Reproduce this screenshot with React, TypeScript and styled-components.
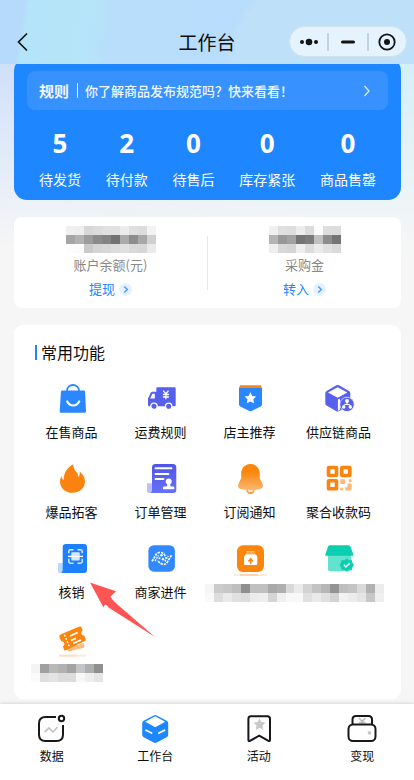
import React from "react";
import styled, { createGlobalStyle } from "styled-components";

const GlobalStyle = createGlobalStyle`
  *, *::before, *::after { box-sizing: border-box; }
  body {
    margin: 0;
    background: #f6f6f6;
    color: #0d0d0d;
    font-family: "Noto Sans CJK SC", sans-serif;
  }
  button, a { font: inherit; color: inherit; }
  button { border: 0; padding: 0; background: none; cursor: pointer; }
  a { text-decoration: none; }
  svg { display: block; flex: none; }
`;

const Page = styled.div`
  display: flex;
  flex-direction: column;
  min-height: 100vh;
  background:
    linear-gradient(180deg, rgba(246, 246, 246, 0) 64px, #f6f6f6 250px),
    linear-gradient(90deg, #cfe0fb, #d3f0f7);
`;

const Header = styled.header`
  position: sticky;
  top: 0;
  z-index: 2;
  display: grid;
  grid-template-columns: 1fr auto 1fr;
  align-items: center;
  padding: 26px 7px 7px;
  background:
    radial-gradient(ellipse 240px 140px at 112% 100%, #bee0f9 96%, rgba(190, 224, 249, 0) 100%),
    linear-gradient(100deg, #b5dafb 6%, #b3e4f8 7%, #b6e3f9 24%, #b9defb 27%, #b8dcfb 60%, #b7dafc 100%);
`;

const BackButton = styled.button`
  width: 32px;
  height: 28px;
  display: grid;
  place-items: center;
`;

const Title = styled.h1`
  margin: 0;
  font-size: 19px;
  line-height: 30px;
  font-weight: 400;
`;

const Capsule = styled.div`
  justify-self: end;
  display: flex;
  align-items: center;
  width: 118px;
  height: 31px;
  border: 1px solid #d3e3ea;
  border-radius: 16px;
  background: #e4f3fd;
`;

const CapsuleButton = styled.button`
  flex: 1;
  height: 18px;
  display: grid;
  place-items: center;
  & + & { border-left: 2px solid #c3d2dc; }
`;

const Main = styled.main`
  flex: 1;
  display: flex;
  flex-direction: column;
  gap: 17px;
  padding: 0 13px 5px 14px;
`;

const OrderCard = styled.section`
  margin-top: -6px;
  padding: 13px 13px 11px;
  border-radius: 13px;
  background: #1e86ff;
  color: #fff;
`;

const Notice = styled.button`
  display: flex;
  align-items: center;
  width: 100%;
  height: 39px;
  padding: 0 17px 0 12px;
  border-radius: 8px;
  background: #3791ff;
  font-size: 13px;
  line-height: 20px;
  font-weight: 500;
  color: #f1f7ff;
`;

const NoticeTag = styled.strong`
  margin-right: 7px;
  padding-right: 8px;
  font-size: 15px;
  line-height: 15px;
  border-right: 1px solid #e4f0ff;
`;

const NoticeText = styled.span`
  flex: 1;
  text-align: left;
`;

const Stats = styled.div`
  display: flex;
  justify-content: space-between;
  padding: 17px 12px 0;
`;

const Stat = styled.button`
  display: flex;
  flex-direction: column;
  align-items: center;
  gap: 10px;
  font-size: 14px;
  line-height: 20px;
`;

const StatValue = styled.strong`
  font-family: "Open Sans", "Noto Sans", sans-serif;
  font-size: 26px;
  line-height: 32px;
  font-weight: 700;
`;

const BalanceCard = styled.section`
  display: flex;
  align-items: center;
  height: 91px;
  border-radius: 8px;
  background: #fff;
`;

const Divider = styled.div`
  width: 1px;
  height: 54px;
  background: #e8e8e8;
`;

const Balance = styled.div`
  flex: 1;
  display: flex;
  flex-direction: column;
  align-items: center;
  font-size: 13px;
  line-height: 20px;
  color: #888;
`;

const BalanceLabel = styled.span`
  margin: 2px 0 4px;
`;

const BalanceAction = styled.button`
  display: flex;
  align-items: center;
  gap: 4px;
  color: #2587ff;
`;

const FeatureCard = styled.section`
  position: relative;
  padding: 16px 18px 17px 13px;
  border-radius: 9px;
  background: #fff;
`;

const SectionTitle = styled.h2`
  display: flex;
  align-items: center;
  gap: 4px;
  margin: 0 0 20px 8px;
  font-size: 16px;
  line-height: 22px;
  font-weight: 400;
  &::before {
    content: "";
    width: 2px;
    height: 15px;
    background: #1e86ff;
  }
`;

const FeatureGrid = styled.div`
  display: grid;
  grid-template-columns: repeat(4, minmax(0, 1fr));
  row-gap: 21px;
`;

const Feature = styled.button`
  display: flex;
  flex-direction: column;
  align-items: center;
  gap: 7px;
  font-size: 13px;
  line-height: 20px;
`;

const Pointer = styled.svg`
  position: absolute;
  left: 74px;
  top: 256px;
  pointer-events: none;
`;

const MosaicLabel = styled.span`
  display: flex;
  justify-content: center;
  height: 20px;
  align-items: flex-end;
`;

const TabBar = styled.nav`
  position: sticky;
  bottom: 0;
  z-index: 2;
  display: grid;
  grid-template-columns: repeat(4, 1fr);
  padding: 10px 0 16px;
  background: #fff;
  box-shadow: 0 -1px 3px rgba(0, 0, 0, 0.12);
`;

const Tab = styled.a`
  display: flex;
  flex-direction: column;
  align-items: center;
  gap: 4px;
  font-size: 12px;
  line-height: 16px;
`;

/* Masked values: one hex pair per tile, giving its grey level. */
const Mosaic = ({ rows, label }: { rows: string[]; label: string }) => {
  const columns = rows[0].split(" ").length;
  return (
    <svg width={columns * 9} height={rows.length * 9} role="img" aria-label={label} shapeRendering="crispEdges">
      {rows.map((row, y) =>
        row.split(" ").map((g, x) => (
          <rect key={`${x}-${y}`} x={x * 9} y={y * 9} width="9" height="9" fill={`#${g}${g}${g}`} />
        ))
      )}
    </svg>
  );
};

const Icon = ({ children }: { children: React.ReactNode }) => (
  <svg width="32" height="32" viewBox="0 0 32 32" fill="none" aria-hidden="true" overflow="visible">
    {children}
  </svg>
);

const TabIcon = ({ children }: { children: React.ReactNode }) => (
  <svg width="30" height="30" viewBox="0 0 30 30" fill="none" aria-hidden="true">
    {children}
  </svg>
);

const CircleArrow = () => (
  <svg width="13" height="13" viewBox="0 0 13 13" fill="none" aria-hidden="true">
    <circle cx="6.5" cy="6.5" r="6.5" fill="#e5f1ff" />
    <path d="M5.3 3.5l3 3-3 3" stroke="#4c9dfb" strokeWidth="1.5" />
  </svg>
);

const BagIcon = () => (
  <Icon>
    <path d="M11 10V7.5a6 5.5 0 0 1 12 0V10" stroke="#2b87fd" strokeWidth="1.8" />
    <path d="M6.3 7.4h21.4q1.3 0 1.4 1.3L30 28.2q0 1.5-1.3 1.5H5q-1.400 0-1.300-1.500L4.900 8.700q.1-1.300 1.400-1.300z" fill="#2b87fd" />
    <path d="M11.200 18.500c3 5.300 9 5.300 12 0" stroke="#fff" strokeWidth="2.200" strokeLinecap="round" />
  </Icon>
);

const TruckIcon = () => (
  <Icon>
    <path d="M12.500 4.300h17q1.200 0 1.200 1.200V22q0 1.300-1.300 1.300H4.200Q3 23.300 3 22v-6.500L5.700 9.800Q6.200 8.700 7.500 8.700h3.800V5.500q0-1.200 1.200-1.200z" fill="#5660ec" />
    <path d="M7.300 10.800h2.500v4.700H5.200z" fill="#fff" />
    <circle cx="9" cy="23.300" r="3.200" fill="#5660ec" stroke="#fff" strokeWidth="1.300" />
    <circle cx="23.700" cy="23.300" r="3.200" fill="#5660ec" stroke="#fff" strokeWidth="1.300" />
    <path d="M18.300 7.700l2.600 3.300 2.600-3.300M20.900 11v5.200M17.900 11.500h6M17.900 14h6" stroke="#fff" strokeWidth="1.300" />
  </Icon>
);

const ShieldIcon = () => (
  <Icon>
    <path d="M5 5h23v16.500q0 1.300-1.200 1.900L17.600 27.900q-1.100.6-2.200 0L6.200 23.400Q5 22.800 5 21.500z" fill="#2b87fd" />
    <path d="M6 2.200h21l1 2.900H5z" fill="#fb8416" />
    <path d="M16.400 9.200l1.800 3.700 4 .6-2.900 2.800.7 4-3.600-1.900-3.600 1.900.7-4-2.900-2.800 4-.6z" fill="#fff" />
  </Icon>
);

const CubeIcon = () => (
  <Icon>
    <path d="M13.400 2.300q1.300-.7 2.600 0L26 7.900q1.300.8 1.300 2.200v10.400q0 1.300-1.300 2.100l-10 5.700q-1.300.7-2.600 0L3.600 22.600q-1.300-.8-1.300-2.100V10.100q0-1.400 1.300-2.200z" fill="#5660ec" />
    <path d="M14.700 4.200L24.300 9.600l-9.600 5.100L5 9.600z" fill="#fff" />
    <path d="M14.900 16.600L16.900 15.500V27l-2 1z" fill="#fff" />
    <circle cx="24" cy="21.400" r="7.200" fill="#5660ec" stroke="#fff" strokeWidth=".7" />
    <path d="M24 18v3.500M20.900 24v-1q0-1.500 1.500-1.500h3.200q1.500 0 1.500 1.500v1" stroke="#fff" strokeWidth="1.100" />
    <g fill="#fff">
      <circle cx="24" cy="17.900" r="2" />
      <circle cx="20.700" cy="24" r="1.700" />
      <circle cx="27.300" cy="24" r="1.700" />
    </g>
  </Icon>
);

const FlameIcon = () => (
  <Icon>
    <path d="M17.300 1.300c.2 4 .7 5.200 3.500 8.200 1 1.100 1.300 3 1.200 4.600 1.600-.8 2-3 1.700-5.600C27 11.300 29 14.700 29 18.500 29 25 23.700 29.800 16.500 29.800S4 25 4 18.700c0-2.200.5-4 1.500-5.700.1 1.800.7 3.100 2 4C7.900 9.800 11.200 4.300 17.300 1.300z" fill="#fb8410" />
  </Icon>
);

const OrderIcon = () => (
  <Icon>
    <path d="M2 20.300h6V30H4q-2 0-2-2z" fill="#bdbffb" />
    <path d="M10.500 1H28q3.300 0 3.300 3.500V27q0 3-3 3H5.500Q7 29.500 7 27V4.500Q7 1 10.500 1z" fill="url(#orderFill)" />
    <path d="M10.500 5.200h16M10.500 11h13M10.500 16h8" stroke="#fff" strokeWidth="1.900" strokeLinecap="round" />
    <circle cx="23.700" cy="18.500" r="3" fill="#fff" />
    <path d="M22.500 20h2.400l.7 3.500h2.900q.8 0 .8.800v2H18v-2q0-.8.800-.8h3z" fill="#fff" />
    <defs>
      <linearGradient id="orderFill" x1="0" y1="0" x2="0" y2="1">
        <stop stopColor="#4f55e8" />
        <stop offset="1" stopColor="#6870f8" />
      </linearGradient>
    </defs>
  </Icon>
);

const BellIcon = () => (
  <Icon>
    <path d="M12.200 26.500h8.500c0 3-1.700 4.800-4.200 4.800s-4.300-1.800-4.300-4.800z" fill="#fba34b" />
    <path d="M14.200 27.300q2.300 1.600 4.600 0" stroke="#fff" strokeWidth="1.500" />
    <path d="M16.500 1c5.500 0 9.300 4.300 9.300 9.700v4.600L28.600 21c1 2.800-.2 4.600-2.700 5.200q-9.400 2-18.800 0C4.600 25.600 3.400 23.800 4.400 21l2.800-5.700v-4.600C7.200 5.300 11 1 16.500 1z" fill="url(#bellFill)" />
    <defs>
      <linearGradient id="bellFill" x1="0" y1="0" x2="0" y2="1">
        <stop offset=".3" stopColor="#fb850d" />
        <stop offset="1" stopColor="#fdb973" />
      </linearGradient>
    </defs>
  </Icon>
);

const QrIcon = () => (
  <Icon>
    <g stroke="#fb8410" strokeWidth="3.600">
      <rect x="5.500" y="4.500" width="8" height="8" rx=".4" />
      <rect x="18.800" y="4.500" width="8" height="8" rx=".4" />
      <rect x="5.500" y="17.800" width="8" height="8" rx=".4" />
    </g>
    <g fill="#fdb877">
      <rect x="17.300" y="16.300" width="4.800" height="4.800" rx=".8" />
      <rect x="25.700" y="16.300" width="2.900" height="2.900" rx=".7" />
      <rect x="17.300" y="24.800" width="2.800" height="2.800" rx=".7" />
      <path d="M24.500 20.500h3.300q.8 0 .8.800v5.500q0 .8-.8.800h-4.700q-.8 0-.8-.8v-2.500h2.200z" />
    </g>
  </Icon>
);

const ScanIcon = () => (
  <Icon>
    <path d="M2 20h6v10H4q-2 0-2-2z" fill="#b8d8fd" />
    <path d="M10 1h18q3 0 3 3.300V27q0 3-3 3H5q1.700-.5 1.700-3V4.300Q6.700 1 10 1z" fill="#1e80ff" />
    <path d="M12.800 10.300V8.500q0-1.700 1.700-1.700h3M21.500 6.800h3q1.700 0 1.700 1.700v1.800M12.800 15.800v2.700q0 1.700 1.700 1.700h3M21.500 20.200h3q1.700 0 1.700-1.700v-2.700" stroke="#d7e8ff" strokeWidth="1.500" />
    <rect x="15.300" y="9.300" width="8.400" height="8.200" rx="1" fill="#d5e7ff" />
    <path d="M12 13.400h15" stroke="#fff" strokeWidth="1.400" />
  </Icon>
);

const MerchantIcon = () => (
  <Icon>
    <rect x="3.400" y="2.200" width="26.500" height="26.500" rx="5.500" fill="#3189fd" />
    <path d="M7 18.300l4.300-7q1-1.500 3-1.800 3.800-.3 5.200 2.200" stroke="#fff" strokeWidth="1.700" strokeDasharray="2.400 .9" />
    <path d="M26.500 12.300l-4.300 7q-2 2.800-5 1.800-3.500-1.200-4.500-4" stroke="#fff" strokeWidth="1.700" strokeDasharray="2.400 .9" />
    <path d="M10 18l3.500-5.500M19.800 18.300l3.500-5.500M19.500 11.500l1.500 4" stroke="#fff" strokeWidth="1.400" strokeDasharray="1.800 1" />
    <g fill="#fff">
      <circle cx="16.500" cy="12.300" r="1.200" />
      <circle cx="18" cy="16.300" r="1.200" />
      <circle cx="14.500" cy="15.300" r="1" />
    </g>
  </Icon>
);

const BoxIcon = () => (
  <Icon>
    <path d="M0 32h33" stroke="#fdd9b5" />
    <path d="M6 32h18" stroke="#fbbd83" />
    <rect x="3" y="2.200" width="27" height="26.800" rx="6" fill="#fb850d" />
    <path d="M12.500 8.800h8" stroke="#fdc793" strokeWidth="1.500" />
    <path d="M11.500 11.300h10" stroke="#fedbb8" strokeWidth="1.500" />
    <path d="M11 12h11.500l.8 2v7q0 1-1 1H11q-1 0-1-1v-7z" fill="#fff" />
    <path d="M16.600 21v-5.500M14.200 17.700h4.800" stroke="#fb850d" strokeWidth="1.500" />
    <path d="M13.900 17.800l2.700-3 2.700 3z" fill="#fb850d" />
  </Icon>
);

const StoreIcon = () => (
  <Icon>
    <path d="M5 11h23v15.300q0 2-2 2H7q-2 0-2-2z" fill="#61e3cf" />
    <path d="M7 2.300h18.500q1.400 0 1.900 1.300l3 7.800q.4 1.300-1 1.300H3.300q-1.400 0-1-1.300l2.800-7.800q.5-1.300 1.900-1.300z" fill="#0bceb1" />
    <path d="M23.700 15.300l2.100 1.900 2.900-.1.700 2.700L31 22l-1.600 2.200-.7 2.700-2.900-.1-2.100 1.900-2.100-1.900-2.900.1-.7-2.700L16.400 22l1.600-2.200.7-2.700 2.900.1z" fill="#0bceb1" />
    <path d="M20.900 21.700l2.100 2.200 3.800-3.700" stroke="#fff" strokeWidth="1.500" />
  </Icon>
);

const TicketIcon = () => (
  <Icon>
    <path d="M3 32.600h27" stroke="#feecd9" strokeWidth="2" />
    <path d="M3 32.700h18" stroke="#fde1c5" strokeWidth="2" />
    <path d="M10 26l18-6 .5 4.500L13 28.500z" fill="#fdbb7e" />
    <path d="M5 11.300L23.500 3.600q1.500-.5 2.100.9l1.100 2.900c-2.400 1.600-1.600 5.200 1.500 5.200l1.500 3.300q.6 1.500-.8 2.200L10 27.300q-1.500.5-2.100-.9L7 23.500c2.500-1.700 1.500-5.300-1.600-5.200L3.300 14q-.5-1.800 1.700-2.700z" fill="#fb850d" />
    <path d="M8.500 11.700l5 12.300" stroke="#fff" strokeWidth="1.400" strokeDasharray="2 1.500" />
    <path d="M14 13l7.700-3.500M15 17.500l5-2.200M17.200 20.500l7.700-3.500" stroke="#fff" strokeWidth="1.800" />
  </Icon>
);

const stats = [
  ["5", "待发货"],
  ["2", "待付款"],
  ["0", "待售后"],
  ["0", "库存紧张"],
  ["0", "商品售罄"],
];

type FeatureItem = { icon: React.FC; label?: string; mask?: string[] };

const features: FeatureItem[] = [
  { icon: BagIcon, label: "在售商品" },
  { icon: TruckIcon, label: "运费规则" },
  { icon: ShieldIcon, label: "店主推荐" },
  { icon: CubeIcon, label: "供应链商品" },
  { icon: FlameIcon, label: "爆品拓客" },
  { icon: OrderIcon, label: "订单管理" },
  { icon: BellIcon, label: "订阅通知" },
  { icon: QrIcon, label: "聚合收款码" },
  { icon: ScanIcon, label: "核销" },
  { icon: MerchantIcon, label: "商家进件" },
  { icon: BoxIcon, mask: ["f5 cb c7 bf 8f c0 c0 a9 af d9", "f9 dd ea e0 dc ec ee d5 f0 f8"] },
  { icon: StoreIcon, mask: ["ea d3 c3 b6 94 be c4 da b1 ec", "f8 e0 ea e0 d3 f2 ec e4 c7 ef"] },
  { icon: TicketIcon, mask: ["f4 a0 b8 b1 a3 c4 ae 8f fe", "fa df e4 dc dc f7 ee e5 ff"] },
];

const tabs = [
  {
    label: "数据",
    icon: (
      <TabIcon>
        <path d="M19 3H8.500Q2 3 2 9.500v11Q2 27 8.500 27h11Q26 27 26 20.500V11" stroke="#181818" strokeWidth="2" />
        <circle cx="24.500" cy="4.500" r="2.700" stroke="#181818" strokeWidth="2" />
        <path d="M7.500 18l4.500-4 4 4 4.500-5" stroke="#c5c5c5" strokeWidth="1.700" />
      </TabIcon>
    ),
  },
  {
    label: "工作台",
    icon: (
      <TabIcon>
        <path d="M13.700 1.500q1.500-.8 3 0l10 5.300q1.500.8 1.500 2.500v11.400q0 1.600-1.500 2.500l-10 5.300q-1.500.8-3 0l-10-5.300q-1.500-.9-1.500-2.500V9.300q0-1.700 1.500-2.500z" fill="#1e86ff" />
        <path d="M15.200 2.300l10 5.400-10 5.500-10-5.500z" fill="#fff" />
        <path d="M6 16.300l5.500 2.700M24.500 16.300L19 19" stroke="#fff" strokeWidth="1.800" strokeLinecap="round" />
      </TabIcon>
    ),
  },
  {
    label: "活动",
    icon: (
      <TabIcon>
        <path d="M6.800 2.200h16.700q2.500 0 2.500 2.500v21q0 2.200-2 1l-8.800-5-8.800 5q-2 1.200-2-1v-21q0-2.500 2.400-2.500z" stroke="#181818" strokeWidth="2" />
        <path d="M15.500 4.300l1.800 3.700 4.200.6-3 3 .7 4.200-3.700-2-3.700 2 .7-4.200-3-3 4.200-.6z" fill="#c8c8c8" />
      </TabIcon>
    ),
  },
  {
    label: "变现",
    icon: (
      <TabIcon>
        <path d="M5.500 10.500V5.500Q5.500 2 9 2h12.500Q25 2 25 5.500v5" stroke="#181818" strokeWidth="2" />
        <path d="M12 4l3.200 3.500L18.500 4M15.200 7.500V10M12 8.500h6.500" stroke="#bdbdbd" strokeWidth="1.600" />
        <rect x="1.500" y="10.500" width="27" height="16.500" rx="4.500" stroke="#181818" strokeWidth="2" />
        <circle cx="22.500" cy="18.800" r="1.900" fill="#c8c8c8" />
      </TabIcon>
    ),
  },
];

export default function App() {
  return (
    <Page>
      <GlobalStyle />
      <Header>
        <BackButton aria-label="返回">
          <svg width="12" height="20" viewBox="0 0 12 20" fill="none">
            <path d="M10 1.500L1.500 10l8.500 8.500" stroke="#161616" strokeWidth="1.700" />
          </svg>
        </BackButton>
        <Title>工作台</Title>
        <Capsule>
          <CapsuleButton aria-label="更多">
            <svg width="20" height="8" viewBox="0 0 20 8" fill="#141414">
              <circle cx="3" cy="4" r="2" />
              <circle cx="10" cy="4" r="3.300" />
              <circle cx="17" cy="4" r="2" />
            </svg>
          </CapsuleButton>
          <CapsuleButton aria-label="最小化">
            <svg width="14" height="4" viewBox="0 0 14 4">
              <rect y=".5" width="14" height="3" rx="1.500" fill="#141414" />
            </svg>
          </CapsuleButton>
          <CapsuleButton aria-label="关闭">
            <svg width="18" height="18" viewBox="0 0 18 18" fill="none">
              <circle cx="9" cy="9" r="7.700" stroke="#141414" strokeWidth="1.800" />
              <circle cx="9" cy="9" r="3" fill="#141414" />
            </svg>
          </CapsuleButton>
        </Capsule>
      </Header>

      <Main>
        <OrderCard>
          <Notice>
            <NoticeTag>规则</NoticeTag>
            <NoticeText>你了解商品发布规范吗？快来看看！</NoticeText>
            <svg width="8" height="12" viewBox="0 0 8 12" fill="none" aria-hidden="true">
              <path d="M1.500 1l4.500 5-4.500 5" stroke="#d8e9ff" strokeWidth="1.300" />
            </svg>
          </Notice>
          <Stats>
            {stats.map(([value, label]) => (
              <Stat key={label}>
                <StatValue>{value}</StatValue>
                {label}
              </Stat>
            ))}
          </Stats>
        </OrderCard>

        <BalanceCard>
          <Balance>
            <Mosaic
              label="账户余额已隐藏"
              rows={["f0 ee d7 dc e0 e1 ed df dc f3", "a5 b2 9c 8b 84 72 ab 8d a8 d0", "fc fb ca d5 d8 dc e1 d9 d7 ea"]}
            />
            <BalanceLabel>账户余额(元)</BalanceLabel>
            <BalanceAction>
              提现
              <CircleArrow />
            </BalanceAction>
          </Balance>
          <Divider />
          <Balance>
            <Mosaic
              label="采购金已隐藏"
              rows={["f0 e0 dd ed dc fc dd dc", "b4 98 a2 74 7b c0 8d 74", "ee d8 d5 ee dc ea e0 d9"]}
            />
            <BalanceLabel>采购金</BalanceLabel>
            <BalanceAction>
              转入
              <CircleArrow />
            </BalanceAction>
          </Balance>
        </BalanceCard>

        <FeatureCard>
          <SectionTitle>常用功能</SectionTitle>
          <FeatureGrid>
            {features.map(({ icon: Glyph, label, mask }, index) => (
              <Feature key={index}>
                <Glyph />
                {mask ? (
                  <MosaicLabel>
                    <Mosaic rows={mask} label="名称已隐藏" />
                  </MosaicLabel>
                ) : (
                  label
                )}
              </Feature>
            ))}
          </FeatureGrid>
          <Pointer width="70" height="60" viewBox="0 0 70 60" aria-hidden="true">
            <path d="M2 1.500L28 10.300 22.500 15.500Q24 19 28 22.300L67 56 20.500 26.500Q17 20.500 15.500 26.500z" fill="#fd5553" />
          </Pointer>
        </FeatureCard>
      </Main>

      <TabBar>
        {tabs.map(({ label, icon }) => (
          <Tab key={label} href="#" aria-current={label === "工作台" ? "page" : undefined}>
            {icon}
            {label}
          </Tab>
        ))}
      </TabBar>
    </Page>
  );
}
